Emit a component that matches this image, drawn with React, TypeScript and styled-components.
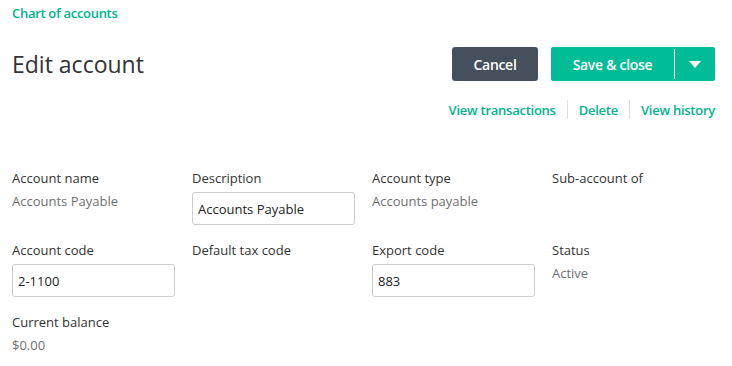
import React from 'react';
import styled, { createGlobalStyle } from 'styled-components';

const GlobalStyle = createGlobalStyle`
  body {
    margin: 0;
    background: #ffffff;
    font-family: "Open Sans", "Liberation Sans", sans-serif;
    color: #333333;
  }
`;

const Page = styled.div`
  padding: 1px 17px 0 12px;
`;

const Breadcrumb = styled.a`
  display: inline-block;
  font-size: 13px;
  line-height: 20px;
  font-weight: 600;
  letter-spacing: -0.3px;
  color: #00b48c;
  text-decoration: none;
`;

const HeaderRow = styled.div`
  display: flex;
  justify-content: space-between;
  align-items: center;
  margin-top: 24px;
  height: 34px;
`;

const Title = styled.h1`
  margin: 0;
  font-size: 23px;
  line-height: 34px;
  font-weight: 400;
  color: #333333;
`;

const Actions = styled.div`
  display: flex;
  gap: 13px;
`;

const Button = styled.button<{ $variant: 'dark' | 'primary' }>`
  height: 34px;
  border: none;
  border-radius: 3px;
  font-family: inherit;
  font-size: 14px;
  font-weight: 600;
  letter-spacing: -0.3px;
  color: #ffffff;
  cursor: pointer;
  padding: 0;
  background: ${p => (p.$variant === 'dark' ? '#46505c' : '#00bd97')};
`;

const CancelButton = styled(Button)`
  width: 86px;
`;

const SplitButton = styled.div`
  display: flex;
  height: 34px;
  border-radius: 3px;
  overflow: hidden;
  background: #00bd97;
`;

const SaveButton = styled(Button)`
  width: 123px;
  border-radius: 0;
`;

const CaretButton = styled(Button)`
  width: 41px;
  border-radius: 0;
  display: flex;
  align-items: center;
  justify-content: center;
  position: relative;

  &::before {
    content: '';
    position: absolute;
    left: 0;
    top: 2px;
    bottom: 2px;
    width: 1px;
    background: #ffffff;
  }
`;

const LinkRow = styled.div`
  display: flex;
  justify-content: flex-end;
  align-items: center;
  margin-top: 19px;
  height: 19px;
`;

const Link = styled.a`
  font-size: 13px;
  font-weight: 600;
  letter-spacing: -0.25px;
  color: #00b48c;
  text-decoration: none;
`;

const Separator = styled.span`
  width: 1px;
  height: 19px;
  background: #dddddd;
  margin: 0 11px;
`;

const FieldGrid = styled.div`
  display: grid;
  grid-template-columns: repeat(4, 163px);
  column-gap: 17px;
  row-gap: 15px;
  margin-top: 49px;
`;

const Field = styled.div`
  display: flex;
  flex-direction: column;
  gap: 3px;
  min-height: 57px;
`;

const Label = styled.div`
  font-size: 13px;
  line-height: 20px;
  color: #333333;
`;

const Value = styled.div`
  font-size: 13px;
  line-height: 20px;
  color: #707070;
`;

const Input = styled.input`
  box-sizing: border-box;
  width: 163px;
  height: 33px;
  margin: 1px 0 0;
  border: 1px solid #cccccc;
  border-radius: 3px;
  padding: 0 5px;
  font-family: inherit;
  font-size: 13px;
  color: #222222;
  background: #ffffff;
  outline: none;
`;

const Caret = () => (
  <svg width="12" height="7" viewBox="0 0 12 7">
    <path d="M0 0 H12 L6 7 Z" fill="#ffffff" />
  </svg>
);

const App: React.FC = () => {
  return (
    <>
      <GlobalStyle />
      <Page>
        <Breadcrumb href="#">Chart of accounts</Breadcrumb>

        <HeaderRow>
          <Title>Edit account</Title>
          <Actions>
            <CancelButton $variant="dark">Cancel</CancelButton>
            <SplitButton>
              <SaveButton $variant="primary">Save &amp; close</SaveButton>
              <CaretButton $variant="primary">
                <Caret />
              </CaretButton>
            </SplitButton>
          </Actions>
        </HeaderRow>

        <LinkRow>
          <Link href="#">View transactions</Link>
          <Separator />
          <Link href="#">Delete</Link>
          <Separator />
          <Link href="#">View history</Link>
        </LinkRow>

        <FieldGrid>
          <Field>
            <Label>Account name</Label>
            <Value>Accounts Payable</Value>
          </Field>
          <Field>
            <Label>Description</Label>
            <Input defaultValue="Accounts Payable" />
          </Field>
          <Field>
            <Label>Account type</Label>
            <Value>Accounts payable</Value>
          </Field>
          <Field>
            <Label>Sub-account of</Label>
          </Field>

          <Field>
            <Label>Account code</Label>
            <Input defaultValue="2-1100" />
          </Field>
          <Field>
            <Label>Default tax code</Label>
          </Field>
          <Field>
            <Label>Export code</Label>
            <Input defaultValue="883" />
          </Field>
          <Field>
            <Label>Status</Label>
            <Value>Active</Value>
          </Field>

          <Field>
            <Label>Current balance</Label>
            <Value>$0.00</Value>
          </Field>
        </FieldGrid>
      </Page>
    </>
  );
};

export default App;
